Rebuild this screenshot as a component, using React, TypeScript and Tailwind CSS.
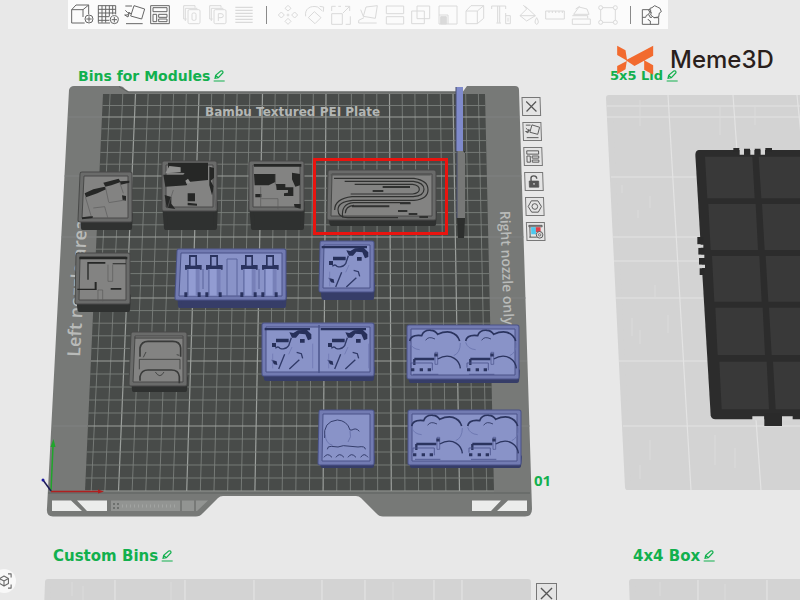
import type { ReactNode } from "react"

// Every tool glyph is drawn on a 72 unit square
function Glyph({ children, className = "" }: { children: ReactNode; className?: string }) {
  return (
    <svg viewBox="0 0 72 72" className={className} fill="none" stroke="currentColor" strokeWidth="3" strokeLinejoin="round">
      {children}
    </svg>
  )
}

const glyphs = {
  addCube: (
    <>
      <path d="M44 60H5V20h34v22M5 20 18 6h38v28M39 20 56 6" />
      <circle cx="57" cy="48" r="12" />
      <path d="M49 48h16M57 40v16" />
    </>
  ),
  addPlate: (
    <>
      <path d="M6 8h53M6 19h53M6 30h53M6 41h34M6 52h34M7 8v51M18 8v51M29 8v51M40 8v32M50 8v26M59 8v26M6 60h36" />
      <circle cx="55" cy="50" r="12" />
      <path d="M47 50h16M55 42v16" />
    </>
  ),
  orient: (
    <>
      <path d="M36 8l32 10-9 30-33-9zM10 9h20M12 62h50M10 22q4 8 18 10M8 36l10 6 4-14M8 36q10 4 14-8" />
    </>
  ),
  arrange: (
    <>
      <path d="M8 8h56v54H8zM15 14h42v12H15zM15 34h11v22H15zM32 34h25v9H32zM32 48h25v8H32z" />
    </>
  ),
  arrangePlate: <path d="M10 12h50v14H10zM10 34h14v26H10zM32 34h28v9H32zM32 51h28v9H32z" strokeWidth="4" />,
  copyObjects: (
    <>
      <path d="M20 48h-9V8h34v6M16 54V16h36" />
      <rect x="24" y="20" width="36" height="42" rx="4" />
      <rect x="36" y="30" width="12" height="22" rx="4" />
    </>
  ),
  copyParts: (
    <>
      <path d="M20 48h-9V8h34v6M16 54V16h36" />
      <rect x="24" y="20" width="36" height="42" rx="4" />
      <path d="M37 54V32h8q7 0 7 6t-7 6h-8" />
    </>
  ),
  layers: <path d="M10 13h52M10 22h52M10 31h52M10 40h52M10 49h52M10 58h52" strokeWidth="4" />,
  move: (
    <>
      <path d="M36 7l9 9-9 8-9-8zM36 46l9 9-9 9-9-9zM16 27l9 9-9 9-9-9zM56 27l9 9-9 9-9-9zM36 32v8M32 36h8" />
    </>
  ),
  rotate: (
    <>
      <path d="M34 26l20 18-18 18-20-18zM8 40C4 18 22 6 44 12l14 12M50 10l12 2-1 14" />
    </>
  ),
  scale: (
    <>
      <path d="M8 32h32v32H8zM8 24V10h12M28 10h8M64 40v24H50M42 30l20-20M48 10h14v14" />
    </>
  ),
  layFlat: <path d="M30 12l34-4-6 38-36-6zM8 52l16-8M8 60h54M8 52v8M22 40L14 20" />,
  cut: <path d="M10 32V9h52v23zM10 63V41h52v22z" />,
  boolean: <path d="M8 24h38v38H8zM24 9h38v38H24z" />,
  support: (
    <>
      <path d="M9 9h54v54H9zM9 36h27v27" />
      <path d="M14 41h17v22H14z" fill="currentColor" />
    </>
  ),
  cube: <path d="M9 24h34v38H9zM9 24L24 8h38L43 24M62 8v38L43 62" />,
  text: <path d="M8 18V9h42v9M26 9v50M32 9v50M22 60h14M50 30v32h14V38H50M57 44v12" />,
  bucket: <path d="M28 10l30 28H12l20-20M12 38l20 16 26-16M22 6l10 12M62 44q-10 16 0 20 10-4 0-20z" />,
  ruler: <path d="M8 24h56v24H8zM18 24v6M28 24v6M38 24v6M48 24v6M58 24v6" />,
  assembly: <path d="M10 48h54v16H10zM10 38h46v8M14 34l16-22 24 6 6 16zM20 18l12-8" />,
  outline: (
    <>
      <path d="M20 14h32M20 58h32M14 20v32M58 20v32" />
      <circle cx="14" cy="14" r="6" />
      <circle cx="58" cy="14" r="6" />
      <circle cx="14" cy="58" r="6" />
      <circle cx="58" cy="58" r="6" />
    </>
  ),
  puzzle: (
    <>
      <path d="M32 20H7v44h49V44H42M7 43h10q1-8 7-8t6 8h6M31 64V54q-7-2-7-6M32 20v8q-6 0-6 6M36 14l8-6 8 4 8 4 4 10-6 4-2 12-14 2-10-8 2-8-8-4 4-8z" />
    </>
  ),
  close: <path d="M15 15l42 42M57 15L15 57" strokeWidth="5" />,
}

type GlyphName = keyof typeof glyphs

const addTools: { name: GlyphName; label: string }[] = [
  { name: "addCube", label: "Add object" },
  { name: "addPlate", label: "Add plate" },
  { name: "orient", label: "Auto orient" },
  { name: "arrange", label: "Arrange" },
]

const copyTools: { name: GlyphName; label: string }[] = [
  { name: "copyObjects", label: "Split to objects" },
  { name: "copyParts", label: "Split to parts" },
  { name: "layers", label: "Variable layer height" },
]

const editTools: { name: GlyphName; label: string }[] = [
  { name: "move", label: "Move" },
  { name: "rotate", label: "Rotate" },
  { name: "scale", label: "Scale" },
  { name: "layFlat", label: "Lay on face" },
  { name: "cut", label: "Cut" },
  { name: "boolean", label: "Mesh boolean" },
  { name: "support", label: "Support painting" },
  { name: "cube", label: "Seam painting" },
  { name: "text", label: "Text shape" },
  { name: "bucket", label: "Color painting" },
  { name: "ruler", label: "Measure" },
  { name: "assembly", label: "Assemble" },
  { name: "outline", label: "Brim ears" },
]

function ToolButton({ name, label, muted = false }: { name: GlyphName; label: string; muted?: boolean }) {
  return (
    <button type="button" aria-label={label} className={muted ? "size-6 text-[#dadada]" : "size-6 text-[#666666]"}>
      <Glyph className="size-6">{glyphs[name]}</Glyph>
    </button>
  )
}

function Toolbar() {
  return (
    <header className="relative ml-[68px] flex h-[29px] w-[600px] items-center bg-[#fbfbfb] pl-[2px] pr-1">
      <div className="flex gap-[2px]">
        {addTools.map((tool) => (
          <ToolButton key={tool.name} {...tool} />
        ))}
      </div>
      <div className="ml-[8px] flex gap-[2px]">
        {copyTools.map((tool) => (
          <ToolButton key={tool.name} {...tool} muted />
        ))}
      </div>
      <div className="ml-[10px] h-[18px] w-px bg-[#8a8a8a]" />
      <div className="ml-[9px] flex flex-1 justify-between">
        {editTools.map((tool) => (
          <ToolButton key={tool.name} {...tool} muted />
        ))}
      </div>
      <div className="ml-[10px] mr-[9px] h-[18px] w-px bg-[#8a8a8a]" />
      <ToolButton name="puzzle" label="Assembly view" />
    </header>
  )
}

function PlateTitle({ title, className }: { title: string; className: string }) {
  return (
    <div className={`absolute flex items-center gap-[3px] font-['DejaVu_Sans'] font-bold text-[#12b04e] ${className}`}>
      <h2 className="whitespace-nowrap">{title}</h2>
      <button type="button" aria-label={`Rename ${title}`} className="size-3">
        <svg viewBox="0 0 36 36" className="size-3" fill="none" stroke="currentColor" strokeWidth="3.5">
          <path d="M2 33h33M6 25l2-9L23 3q7-2 7 5L16 23zM8 16l8 7" />
        </svg>
      </button>
    </div>
  )
}

function PlateButton({ label, children }: { label: string; children: ReactNode }) {
  return (
    <button type="button" aria-label={label} className="size-[19px] border border-[#777777] bg-[#e4e4e4] text-[#555555]">
      <Glyph className="size-full">{children}</Glyph>
    </button>
  )
}

function PlateTools() {
  return (
    <div className="absolute left-[524px] top-[97px] flex skew-x-2 flex-col gap-[6px]">
      <PlateButton label="Remove plate">{glyphs.close}</PlateButton>
      <PlateButton label="Auto orient plate">
        <g strokeWidth="4">{glyphs.orient}</g>
      </PlateButton>
      <PlateButton label="Arrange plate">{glyphs.arrangePlate}</PlateButton>
      <PlateButton label="Lock plate">
        <path d="M16 34h40v26H16z" fill="currentColor" />
        <path d="M24 34V22q0-10 12-10t12 10v2" strokeWidth="6" />
        <path d="M36 42v8" stroke="#ddd" strokeWidth="5" />
      </PlateButton>
      <PlateButton label="Plate settings">
        <path d="M22 12h28l14 24-14 24H22L8 36z" strokeWidth="4" />
        <circle cx="36" cy="36" r="12" strokeWidth="4" />
      </PlateButton>
      <PlateButton label="Filament map">
        <path d="M8 10h56v6H8zM12 16v44M8 60h32" strokeWidth="4" />
        <path d="M17 18h20v30H17z" fill="#4cc8ee" stroke="none" />
        <path d="M37 18h20v20H37z" fill="#e0404a" stroke="none" />
        <circle cx="52" cy="50" r="14" fill="#ddd" strokeWidth="4" />
        <circle cx="52" cy="50" r="5" />
      </PlateButton>
    </div>
  )
}

// Horizontal major lines of the plate; the gaps widen toward the viewer
const majorRows = [117, 176, 237, 298, 361, 426, 491]

function rowY(i: number) {
  const k = Math.min(Math.floor(i / 5), majorRows.length - 2)
  return majorRows[k] + ((majorRows[k + 1] - majorRows[k]) * (i - k * 5)) / 5
}

function PlateGrid() {
  const columns = Array.from({ length: 30 }, (_, i) => i - 2)
  const rows = Array.from({ length: 32 }, (_, i) => i - 1)
  return (
    <g>
      <path d="M103 94H485L494 491.5H85z" fill="#484b49" />
      {columns.map((i) => (
        <path
          key={i}
          d={`M${135.5 + 12.7 * i} 94L${118.5 + 13.64 * i} 491`}
          stroke={i % 5 === 0 ? "#9b9f9c" : "#7a7f7c"}
          strokeWidth={i % 5 === 0 ? 1.2 : 0.9}
        />
      ))}
      {rows.map((i) => {
        const y = i < 0 ? 105.5 : rowY(i)
        const edge = ((y - 94) / 397) * 18
        return (
          <path
            key={i}
            d={`M${103 - edge} ${y}H${485 + edge / 2}`}
            stroke={i % 5 === 0 ? "#9b9f9c" : "#7a7f7c"}
            strokeWidth={i % 5 === 0 ? 1.2 : 0.9}
          />
        )
      })}
      <path d="M485 117h35M487 176h35M488 237h36M490 298h36M491 361h36M492 426h38M68 117h34M64 176h35M61 237h36M53 426h34" stroke="#858886" strokeWidth="0.7" />
    </g>
  )
}

const tones = {
  gray: { side: "#2f3130", rim: "#6a6b6a", edge: "#484948", floor: "#838382" },
  blue: { side: "#363d68", rim: "#727bb2", edge: "#4a5388", floor: "#8993c8" },
}

type BinProps = {
  x: number
  y: number
  w: number
  h: number
  depth: number
  lean?: number
  tone: keyof typeof tones
}

// Open box seen from above: dark front wall, rim and sunken floor
function Bin({ x, y, w, h, depth, lean = 0, tone }: BinProps) {
  const c = tones[tone]
  const b = y + h
  return (
    <g strokeLinejoin="round">
      <path
        d={`M${x + 2} ${b - 8}L${x + 4 - lean / 2} ${b + depth - 2}H${x + w - 2}L${x + w - 1} ${b - 8}z`}
        fill={c.side}
        stroke={c.side}
        strokeWidth="4"
      />
      <path d={`M${x + 2} ${y + 2}H${x + w - 2}V${b - 2}H${x + 2 - lean}z`} fill={c.rim} stroke={c.edge} strokeWidth="5" />
      <path d={`M${x + 2} ${y + 2}H${x + w - 2}V${b - 2}H${x + 2 - lean}z`} fill={c.rim} stroke={c.rim} strokeWidth="3" />
      <path d={`M${x + 4} ${y + 4}H${x + w - 4}V${b - 4}H${x + 4 - lean}z`} fill={c.floor} stroke={c.edge} strokeWidth="1" />
    </g>
  )
}

function GrayParts() {
  return (
    <g>
      <Bin x={80} y={172} w={52} h={50} depth={8} lean={2} tone="gray" />
      <Bin x={162} y={161} w={55} h={50} depth={19} tone="gray" />
      <Bin x={249} y={161} w={55} h={50} depth={19} tone="gray" />
      <Bin x={76} y={253} w={54} h={51} depth={8} lean={1} tone="gray" />
      <Bin x={131} y={332} w={56} h={54} depth={6} lean={2} tone="gray" />
      <Bin x={328} y={170} w={108} h={50} depth={6} lean={1} tone="gray" />

      <g transform="translate(40 130) scale(.33333)">
        <g fill="#262726">
          <path d="M134 190l26-12 34-8 4 8-26 12-34 12zM190 158l46-12 6 10-28 10-18 4zM240 154l28-2v6l-26 6zM246 196l12 2v14l-10-2zM126 262l32-4v6l-32 4z" />
          <path d="M384 98h120v52l-60 6-4 10-64 4-6-36h60l4-5-50-2zM508 110l14 4v30l-10 8 10 20-6 24-8-30zM374 195l20 6v20l12 16-26-4zM443 190h22v24h-22zM443 218l28 3v6l-28-1z" />
          <path d="M642 102h142v8H642zM642 132h64v24l-20 10h-42zM756 128l24 4v34l-14 4-10-22zM708 162h28v10h24v26h-28v-8l12-2v-8h-34zM646 192h18v10h-18zM762 222h20v14l-18-4z" />
          <path d="M118 380h144v8H118zM142 396h54v5h-50v48h-4zM218 400h40v3h-40zM112 476h52v-20h6v24h-58zM212 474h32v5h-32z" />
        </g>
        <g fill="none" stroke="#5a5b5a" strokeWidth="2">
          <path d="M136 200l18 60M160 234l34-4 10 36M206 218l50-8M196 170l10 46M240 160l10 30M400 180l-18 56M520 170l8 66M662 170v64M714 206v32M664 206h50M706 132v34M204 404v50h14v-50M174 480v34M188 480v34M174 480h14" />
        </g>
        <path d="M388 108l34 4v14l-46 4zM436 152l8-6 8 12-12 4z" fill="#929291" />
      </g>

      <g transform="translate(30 310) scale(.33333)" fill="none" stroke="#3a3b3a">
        <path d="M314 84h144" strokeWidth="3" />
        <path d="M330 140v-26q4-20 24-20h74q22 0 24 20v26M330 212v-12q4-20 24-20h70q22 0 24 20v20" strokeWidth="5" />
        <path d="M328 148h122v30M328 148v30M340 142l8-16M440 134l8 2M376 186q14 22 26 0" strokeWidth="2.5" />
      </g>

      {/* spiral filament clip */}
      <g transform="translate(300 130) scale(.33333)" fill="none" stroke="#303130" strokeWidth="3.5">
        <path d="M102 145h240q42 6 42 34t-42 32H158q-44 4-44 28t30 24h150" />
        <path d="M134 154h206q32 4 32 24t-32 22H156q-52 6-52 40" />
        <path d="M164 163h174q20 3 20 15t-20 14H152" />
        <path d="M128 262q-6-40 32-44h170M136 250q0-22 26-24" />
        <path d="M248 171h82M218 183h32M156 229h112M294 243h28M326 252h26M358 261h26M300 220h32" strokeWidth="6" />
        <path d="M92 134h300" stroke="#555655" strokeWidth="5" />
      </g>

      <path d="M457 151h8v67l-1 20h-6l-1-20z" fill="#2d2f2e" />
      <path d="M457 151h6l2 2v65h-8z" fill="#777877" />
      <path d="M456 87h7v64h-7z" fill="#7f8acb" />
      <path d="M456 87v64M457 151v67" stroke="#474c6d" strokeWidth="1" />
    </g>
  )
}

// Scraper pocket shared by the single bin and the double bin
function ToolPocket() {
  return (
    <g>
      <g fill="#27305a">
        <path d="M-52 -57H84v7H-52z" />
        <path d="M-18 -25h38v11h-38zM-30 -12h12v12h-12zM22 -44l12 2 14-8 26-2 14 14v14l-10 4-8-18-18-2-10 12h-12zM54 -24h14v11H54zM-32 38l16 5 2 11-10-2z" />
      </g>
      <path d="M-20 4q8-8 14 0 16 6 26-8l8-24M8 22L-10 66M22 66l30-28M44 16l14 4 4 14" fill="none" stroke="#303a68" strokeWidth="4" />
      <path d="M-28 20v44M30 0l-10 22M92 -10v74" fill="none" stroke="#6973ad" strokeWidth="2" />
    </g>
  )
}

function CloudPocket() {
  return (
    <g fill="none" stroke="#2b345f" strokeWidth="4">
      <path d="M8 48q4-20 36-16 6-18 28-16 12 0 20 12 22-10 40-6 20 6 26 26" strokeWidth="5" />
      <path d="M56 46q8-14 28-4" strokeWidth="2.5" />
      <path d="M92 102q28-16 50-2 16 10 18 30" />
      <path d="M160 54q0 30-20 38M8 52q6 20 30 22" stroke="#6973ad" strokeWidth="2.5" />
      <path d="M22 102h60M22 102v18" strokeWidth="7" />
      <path d="M84 82h8v36h-8z" stroke="#4a538b" strokeWidth="2" />
      <path d="M82 90h10" strokeWidth="9" />
      <path d="M12 134h10M38 134h10M62 134h10" strokeWidth="9" />
      <path d="M12 128v-14h64v22M18 148h76" strokeWidth="2.5" stroke="#4a538b" />
    </g>
  )
}

function MotorPocket() {
  return (
    <g fill="#2a335f">
      <path d="M0 30h50v14H0zM12 0h24v32H12z" />
      <path d="M17 6h14v26H17z" fill="#8993c8" />
      <path d="M6 42h38v80H6z" fill="#929cd2" />
      <path d="M32 42h12v80H32z" fill="#7780b8" />
      <path d="M6 42h5v80H6z" fill="#6a74ac" />
      <path d="M-2 112h9v14h-9zM38 112h9v14h-9z" />
    </g>
  )
}

function BlueParts() {
  return (
    <g>
      <Bin x={177} y={249} w={109} h={51} depth={8} lean={2} tone="blue" />
      <Bin x={320} y={241} w={54} h={51} depth={8} lean={1} tone="blue" />
      <Bin x={262} y={323} w={112} h={53} depth={5} tone="blue" />
      <Bin x={407} y={325} w={112} h={54} depth={4} tone="blue" />
      <Bin x={319} y={410} w={55} h={55} depth={3} lean={1} tone="blue" />
      <Bin x={408} y={410} w={113} h={55} depth={3} tone="blue" />

      {[185, 206, 241, 262].map((x) => (
        <g key={x} transform={`translate(${x} 255) scale(.33333)`}>
          <MotorPocket />
        </g>
      ))}
      <path d="M227 296v-37h10v37M203 269v20M259 269v20" fill="none" stroke="#5a649c" />

      {[339, 282, 338].map((x, i) => (
        <g key={`${x}-${i}`} transform={`translate(${x} ${i === 0 ? 265 : 347}) scale(.33333)`}>
          <ToolPocket />
        </g>
      ))}
      <path d="M319 325v48" stroke="#4d568c" strokeWidth="1.5" />

      {[407, 463].map((x) => (
        <g key={x}>
          <g transform={`translate(${x} 325) scale(.33333)`}>
            <CloudPocket />
          </g>
          <g transform={`translate(${x + 2} 410) scale(.33333)`}>
            <CloudPocket />
          </g>
        </g>
      ))}

      <g transform="translate(250 310) scale(.33333)" fill="none" stroke="#343d6b" strokeWidth="3">
        <path d="M224 384q-6-50 38-54 30 2 38 30l6 0q12-8 22 4M232 418q0-10 12-9l20 2 16-4 44 4q22-4 22 7" />
        <path d="M226 374q0 26 22 32M294 396q12-14 6-34" stroke="#6973ad" />
        <path d="M222 442q10-16 24 0M258 442q10-16 24 0M294 442q10-16 24 0M332 442q10-16 22 0" />
      </g>
    </g>
  )
}

const lidRows = [
  { x: 315, y: 80, h: 125 },
  { x: 325, y: 222, h: 138 },
  { x: 336, y: 378, h: 137 },
  { x: 346, y: 533, h: 142 },
  { x: 358, y: 695, h: 143 },
]

function Lid() {
  return (
    <g transform="translate(600 130) scale(.33333)">
      <path d="M296 60H620V868H346q-12 0-14-12L286 74q0-12 10-14z" fill="#2c2c2c" />
      {lidRows.map((row) => (
        <g key={row.y} fill="#393939">
          <path d={`M${row.x} ${row.y}h142l7 ${row.h}h-142z`} />
          <path d={`M${row.x + 161} ${row.y}h160v${row.h}h-152z`} />
        </g>
      ))}
      <path d="M400 54h18v12h-18zM432 56h18v16h-18zM464 56h18v16h-18zM496 54h20v12h-20z" fill="#2a2a2a" />
      <path d="M419 56h13v18h-13zM451 56h12v18h-12zM482 56h13v18h-13z" fill="#d6d6d6" />
      <path d="M292 321h18v22h-18zM295 353h18v21h-18zM297 384h18v20h-18zM299 415h14v20h-14z" fill="#2a2a2a" />
      <path d="M288 344h22v9h-22zM290 374h23v10h-23zM292 404h23v10h-23z" fill="#d6d6d6" />
      <path d="M457 859h36v12h-36zM546 859h32v12h-32z" fill="#d6d6d6" />
      <path d="M493 850h53v38h-53z" fill="#2a2a2a" />
    </g>
  )
}

function Scene() {
  return (
    <svg viewBox="0 0 800 600" className="absolute left-0 top-0 h-[600px] w-[800px]" aria-hidden="true">
      {/* idle plates */}
      <g fill="#d3d3d3" stroke="#d3d3d3" strokeWidth="6" strokeLinejoin="round">
        <path d="M609 98H810V487H628z" />
        <path d="M48 582H528V610H47z" />
        <path d="M632 582H810V610H633z" />
      </g>
      <g stroke="#e3e3e3" strokeWidth="1.2" fill="none">
        <path d="M607 106h193M607 117h193M611 177h189M613 237h189M614 261h189M616 298h184M619 361h181M623 426h177" />
        <path d="M668 95l23 395M733 95l28 395M797 95l10 100M115 580v20M185 580v20M254 580v20M322 580v20M365 580v20M434 580v20M462 580v20M698 580v20M767 580v20" />
      </g>
      <path d="M622 185v8M650 196v12M638 210v8M632 318v18M655 285v12M668 315v18M640 330v14M650 440v20M640 465v14M715 435v30M735 448v20M720 105v30M640 100v26M755 105v20M72 582v14M83 586v14M171 582v18M393 582v18M660 582v14M725 584v16" stroke="#dbdbdb" />

      {/* active plate */}
      <path
        d="M74 86H119Q123 86 125 89L129 91.5H463L467 86H515Q519 86 519 90L532 509Q532 516.5 525 516.5H383Q379 516.5 376 513L361 498Q359 496 356 496H223Q220 496 218 498L203 513Q200 516.5 196 516.5H53Q46 516.5 47 508L69 90Q70 86 74 86z"
        fill="#777977"
      />
      <path d="M119 86.5L128 92H463M48 493H530" fill="none" stroke="#5f6260" strokeWidth="1" />
      <PlateGrid />
      <g fill="#ebeceb">
        <path d="M52 500.5H71L82 511H52zM77 500.5H107V511H87zM472 500.5H501L491 511H472zM508 500.5H527V511H497z" />
      </g>
      <path d="M111 500.5H180V511H111zM182 500.5H194V511H182zM196 500.5H208L197 511H196z" fill="#929492" />
      <path d="M113 503h2v2h-2zM117 503h2v2h-2zM113 507h2v2h-2zM117 507h2v2h-2z" fill="#6d706e" />
      <path d="M122 506h54" stroke="#a2a4a2" strokeWidth="3" strokeDasharray="1 3" />

      <g fill="#b9bbb9" className="font-['Open_Sans'] font-semibold">
        <text transform="translate(80 357) rotate(-87)" className="text-[18px]">
          Left nozzle area
        </text>
        <text transform="translate(500 211) rotate(88)" className="text-[14px]">
          Right nozzle only
        </text>
      </g>
      <text x="205" y="116" fill="#b4b7b5" className="font-['DejaVu_Sans'] text-[12px] font-bold">
        Bambu Textured PEI Plate
      </text>

      <GrayParts />
      <BlueParts />
      <rect x="314.5" y="159.5" width="132" height="74" fill="none" stroke="#e9140f" strokeWidth="3" />

      {/* origin axes */}
      <path d="M51 491L53 446" stroke="#1fa52b" strokeWidth="1.5" />
      <path d="M50.5 447l3-8 2 8z" fill="#1fa52b" />
      <path d="M51 491.5H98" stroke="#b01f1f" strokeWidth="1.5" />
      <path d="M98 489.5l6 2-6 2z" fill="#b01f1f" />
      <path d="M51 491L43 480" stroke="#1d1a56" strokeWidth="1.5" />
      <circle cx="43" cy="480" r="1.5" fill="#1d1a9e" />

      <Lid />
    </svg>
  )
}

function Brand() {
  return (
    <div className="absolute left-[617px] top-[44px] flex items-center gap-4">
      <svg viewBox="38 20 110 90" className="h-[30px] w-[37px]" fill="#f26a2e" aria-hidden="true">
        <path d="M38 22l25 14 5 31-30-17zM64 66l82-44v30L90 83zM67 68l-4 25-25 15V83zM119 66l27 15v28l-27-15z" />
      </svg>
      <span className="font-['Inter'] text-2xl leading-8 font-medium text-[#2a1f1c]">Meme3D</span>
    </div>
  )
}

export default function App() {
  return (
    <main className="relative h-screen min-h-[600px] w-full overflow-hidden bg-[#e8e8e8]">
      <Scene />
      <Toolbar />
      <PlateTitle title="Bins for Modules" className="left-[78px] top-[68px] text-[14px] leading-4" />
      <PlateTitle title="5x5 Lid" className="left-[610px] top-[68px] text-[13px] leading-4" />
      <PlateTitle title="Custom Bins" className="left-[53px] top-[548px] text-[15px] leading-4" />
      <PlateTitle title="4x4 Box" className="left-[633px] top-[548px] text-[15px] leading-4" />
      <span className="absolute left-[534px] top-[472px] font-['Open_Sans'] text-[15px] leading-4 font-bold text-[#12b04e]">01</span>
      <PlateTools />
      <button type="button" aria-label="Remove Custom Bins plate" className="absolute left-[536px] top-[583px] size-[21px] border border-[#777777] bg-[#e4e4e4] text-[#555555]">
        <Glyph className="size-full">{glyphs.close}</Glyph>
      </button>
      <Brand />
      <button type="button" aria-label="Fit camera" className="absolute -left-2 top-[569px] flex size-6 items-center justify-center rounded-full bg-[#f8f8f8] text-[#6a6a6a]">
        <Glyph className="size-4">
          <path d="M4 20V4h14M54 4h14v16M68 52v16H54M18 68H4V52M36 14l20 11v22L36 58 16 47V25zM16 25l20 11 20-11M36 36v22" strokeWidth="5" />
        </Glyph>
      </button>
    </main>
  )
}
